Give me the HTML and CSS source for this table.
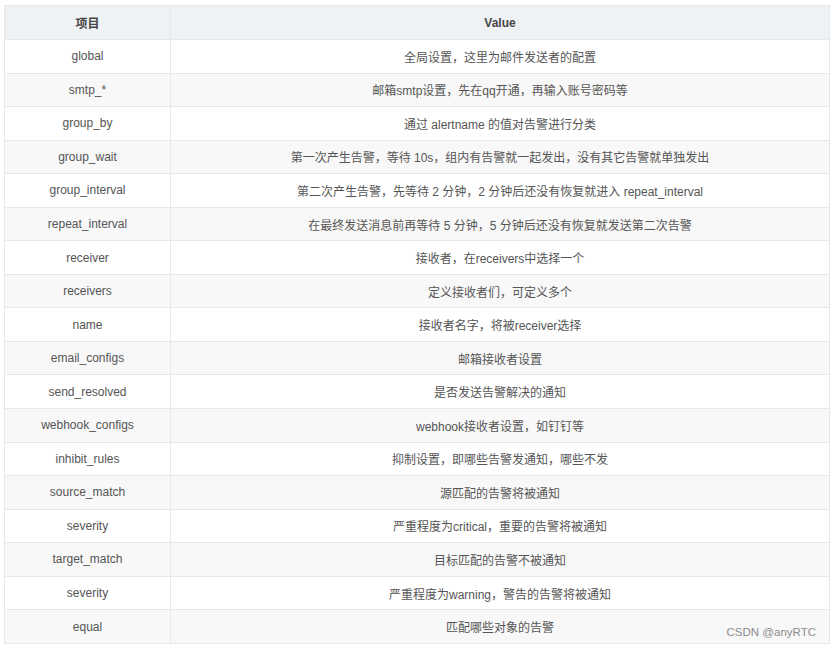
FILE: index.html
```html
<!DOCTYPE html>
<html lang="zh">
<head>
<meta charset="utf-8">
<link rel="stylesheet" href="styles.css">
</head>
<body>
<div class="wrap">
<table class="conf">
<thead>
<tr><th class="k">项目</th><th class="v">Value</th></tr>
</thead>
<tbody>
<tr><td>global</td><td>全局设置，这里为邮件发送者的配置</td></tr>
<tr><td>smtp_*</td><td>邮箱smtp设置，先在qq开通，再输入账号密码等</td></tr>
<tr><td>group_by</td><td>通过 alertname 的值对告警进行分类</td></tr>
<tr><td>group_wait</td><td>第一次产生告警，等待 10s，组内有告警就一起发出，没有其它告警就单独发出</td></tr>
<tr><td>group_interval</td><td>第二次产生告警，先等待 2 分钟，2 分钟后还没有恢复就进入 repeat_interval</td></tr>
<tr><td>repeat_interval</td><td>在最终发送消息前再等待 5 分钟，5 分钟后还没有恢复就发送第二次告警</td></tr>
<tr><td>receiver</td><td>接收者，在receivers中选择一个</td></tr>
<tr><td>receivers</td><td>定义接收者们，可定义多个</td></tr>
<tr><td>name</td><td>接收者名字，将被receiver选择</td></tr>
<tr><td>email_configs</td><td>邮箱接收者设置</td></tr>
<tr><td>send_resolved</td><td>是否发送告警解决的通知</td></tr>
<tr><td>webhook_configs</td><td>webhook接收者设置，如钉钉等</td></tr>
<tr><td>inhibit_rules</td><td>抑制设置，即哪些告警发通知，哪些不发</td></tr>
<tr><td>source_match</td><td>源匹配的告警将被通知</td></tr>
<tr><td>severity</td><td>严重程度为critical，重要的告警将被通知</td></tr>
<tr><td>target_match</td><td>目标匹配的告警不被通知</td></tr>
<tr><td>severity</td><td>严重程度为warning，警告的告警将被通知</td></tr>
<tr><td>equal</td><td>匹配哪些对象的告警</td></tr>
</tbody>
</table>
<span class="mark">CSDN @anyRTC</span>
</div>
</body>
</html>
```

FILE: styles.css
```css
html, body {
  margin: 0;
  padding: 0;
  background: #ffffff;
}
body {
  font-family: "Liberation Sans", Arial, "Noto Sans CJK SC", sans-serif;
  font-size: 12px;
  color: #555555;
}
.wrap {
  position: relative;
  padding: 5px 0 0 4px;
}
.conf {
  border-collapse: collapse;
  width: 826px;
  table-layout: fixed;
}
.conf th, .conf td {
  border: 1px solid #e8e8e8;
  text-align: center;
  padding: 0 8px;
  white-space: nowrap;
}
.conf th {
  height: 33px;
  background: #eff2f5;
  font-weight: bold;
  color: #444444;
}
.conf th.k {
  width: 149px;
}
.conf td {
  height: 32.55px;
}
.conf tbody tr:nth-child(even) td {
  background: #f8f8f8;
}
.mark {
  position: absolute;
  right: 15px;
  top: 626px;
  font-size: 11.5px;
  color: #8c8c8c;
}
```
